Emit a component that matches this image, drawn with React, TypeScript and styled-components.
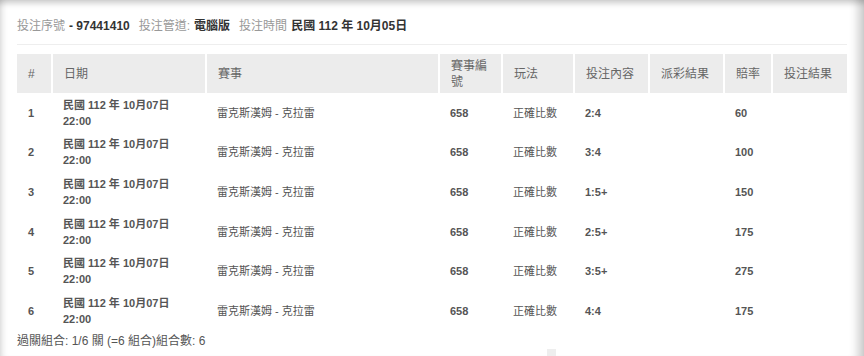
import styled, { createGlobalStyle } from 'styled-components'

const GlobalStyle = createGlobalStyle`
  html, body {
    margin: 0;
    padding: 0;
    background: #ffffff;
  }
  body {
    font-family: "Liberation Sans", "Noto Sans CJK TC", Arial, sans-serif;
    font-size: 12px;
    color: #555555;
  }
`

type Bet = {
  no: number
  content: string
  odds: string
}

const bets: Bet[] = [
  { no: 1, content: '2:4', odds: '60' },
  { no: 2, content: '3:4', odds: '100' },
  { no: 3, content: '1:5+', odds: '150' },
  { no: 4, content: '2:5+', odds: '175' },
  { no: 5, content: '3:5+', odds: '275' },
  { no: 6, content: '4:4', odds: '175' }
]

const columns = [
  { title: '#', width: 35 },
  { title: '日期', width: 154 },
  { title: '賽事', width: 233 },
  { title: '賽事編號', width: 63 },
  { title: '玩法', width: 72 },
  { title: '投注內容', width: 75 },
  { title: '派彩結果', width: 75 },
  { title: '賠率', width: 48 },
  { title: '投注結果', width: 75 }
]

export default function App() {
  return (
    <>
      <GlobalStyle />
      <Panel>
        {/* ticket info */}
        <InfoBar>
          <Label>投注序號</Label>
          <Value>- 97441410</Value>
          <Label>投注管道:</Label>
          <Value>電腦版</Value>
          <Label>投注時間</Label>
          <Value>民國 112 年 10月05日</Value>
        </InfoBar>
        <Divider />

        {/* bet lines */}
        <BetTable>
          <colgroup>
            {columns.map((c) => (
              <col key={c.title} style={{ width: c.width }} />
            ))}
          </colgroup>
          <thead>
            <tr>
              {columns.map((c) => (
                <HeadCell key={c.title}>{c.title}</HeadCell>
              ))}
            </tr>
          </thead>
          <tbody>
            {bets.map((b) => (
              <tr key={b.no}>
                <Cell $bold>{b.no}</Cell>
                <Cell $bold>
                  民國 112 年 10月07日
                  <br />
                  22:00
                </Cell>
                <Cell>雷克斯漢姆 - 克拉雷</Cell>
                <Cell $bold>658</Cell>
                <Cell>正確比數</Cell>
                <Cell $bold>{b.content}</Cell>
                <Cell />
                <Cell $bold>{b.odds}</Cell>
                <Cell />
              </tr>
            ))}
          </tbody>
        </BetTable>

        <Footer>過關組合: 1/6 關 (=6 組合)組合數: 6</Footer>
        <ScrollThumb />
      </Panel>
    </>
  )
}

const Panel = styled.div`
  position: relative;
  box-sizing: border-box;
  width: 864px;
  height: 356px;
  padding: 17px 17px 0 17px;
  background: #ffffff;
  overflow: hidden;
  box-shadow:
    inset 0 7px 6px -4px rgba(0, 0, 0, 0.22),
    inset 7px 0 6px -5px rgba(0, 0, 0, 0.14),
    inset -14px 0 10px -8px rgba(0, 0, 0, 0.2);
`

const InfoBar = styled.div`
  display: flex;
  align-items: center;
  height: 18px;
  line-height: 18px;
  font-size: 12px;
`

const Label = styled.span`
  color: #999999;
  margin-right: 4px;
`

const Value = styled.span`
  color: #333333;
  font-weight: 700;
  margin-right: 9px;
`

const Divider = styled.hr`
  margin: 9px 0 0 0;
  width: 830px;
  border: none;
  border-top: 1px solid #eeeeee;
`

const BetTable = styled.table`
  margin-top: 9px;
  width: 830px;
  table-layout: fixed;
  border-collapse: collapse;
`

const HeadCell = styled.th`
  height: 39px;
  box-sizing: border-box;
  padding: 3px 11px;
  background: #ececec;
  color: #666666;
  font-size: 12px;
  font-weight: 400;
  text-align: left;
  line-height: 16px;
  border-left: 2px solid #ffffff;

  &:first-child {
    border-left: none;
  }
`

const Cell = styled.td<{ $bold?: boolean }>`
  height: 39.6px;
  box-sizing: border-box;
  padding: 3px 11px;
  color: #555555;
  font-size: 11px;
  font-weight: ${(p) => (p.$bold ? 700 : 400)};
  line-height: 16px;
  vertical-align: middle;
  white-space: nowrap;
`

const Footer = styled.div`
  margin-top: 2px;
  color: #555555;
  font-size: 12px;
  line-height: 16px;
`

const ScrollThumb = styled.div`
  position: absolute;
  left: 547px;
  bottom: 0;
  width: 9px;
  height: 7px;
  background: #eeeeee;
`
